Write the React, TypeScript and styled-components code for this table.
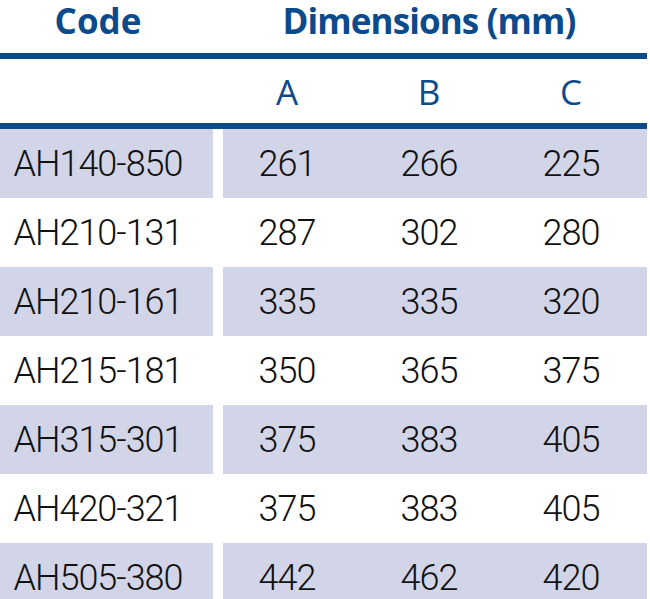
import styled, { createGlobalStyle } from "styled-components";

const GlobalStyle = createGlobalStyle`
  body {
    margin: 0;
    background: #fff;
  }
`;

const BLUE = "#0b4a8b";
const SHADE = "#d2d5e8";

const Table = styled.div`
  width: 647px;
  display: flex;
  flex-direction: column;
`;

const TitleRow = styled.div`
  display: grid;
  grid-template-columns: 213px 424px;
  column-gap: 10px;
  height: 59px;
  box-sizing: border-box;
  align-items: start;
  border-bottom: 6px solid ${BLUE};
`;

const Title = styled.div<{ $pad: number; $tight?: boolean }>`
  font-family: "Open Sans", "Liberation Sans", sans-serif;
  font-weight: 700;
  font-size: 35px;
  line-height: 42px;
  letter-spacing: ${(p) => (p.$tight ? "-0.9px" : "0")};
  color: ${BLUE};
  text-align: center;
  padding-right: ${(p) => p.$pad}px;
`;

const SubRow = styled.div`
  display: grid;
  grid-template-columns: 213px 424px;
  column-gap: 10px;
  height: 70px;
  border-bottom: 6px solid ${BLUE};
  box-sizing: border-box;
`;

const Row = styled.div`
  display: grid;
  grid-template-columns: 213px 424px;
  column-gap: 10px;
  height: 69px;
`;

const CodeCell = styled.div<{ $shade?: boolean }>`
  background: ${(p) => (p.$shade ? SHADE : "transparent")};
  display: flex;
  align-items: center;
  justify-content: center;
  padding-right: 17px;
  font-family: Roboto, "Liberation Sans", sans-serif;
  font-weight: 300;
  font-size: 36px;
  letter-spacing: -1px;
  color: #111;
`;

const DataCell = styled.div<{ $shade?: boolean }>`
  background: ${(p) => (p.$shade ? SHADE : "transparent")};
  display: grid;
  grid-template-columns: 135px 142px 142px;
  padding-right: 5px;
`;

const Value = styled.div`
  display: flex;
  align-items: center;
  justify-content: center;
  font-family: Roboto, "Liberation Sans", sans-serif;
  font-weight: 300;
  font-size: 36px;
  letter-spacing: -1px;
  color: #111;

  &:first-child {
    padding-right: 7px;
  }
`;

const Letter = styled(Value)`
  font-family: "Open Sans", "Liberation Sans", sans-serif;
  font-weight: 400;
  font-size: 35px;
  letter-spacing: 0;
  color: ${BLUE};
`;

const rows: [string, number, number, number][] = [
  ["AH140-850", 261, 266, 225],
  ["AH210-131", 287, 302, 280],
  ["AH210-161", 335, 335, 320],
  ["AH215-181", 350, 365, 375],
  ["AH315-301", 375, 383, 405],
  ["AH420-321", 375, 383, 405],
  ["AH505-380", 442, 462, 420],
];

const App = () => {
  return (
    <>
      <GlobalStyle />
      <Table>
        <TitleRow>
          <Title $pad={17}>Code</Title>
          <Title $pad={12} $tight>
            Dimensions (mm)
          </Title>
        </TitleRow>
        <SubRow>
          <div />
          <DataCell>
            <Letter>A</Letter>
            <Letter>B</Letter>
            <Letter>C</Letter>
          </DataCell>
        </SubRow>
        {rows.map(([code, a, b, c], i) => (
          <Row key={code}>
            <CodeCell $shade={i % 2 === 0}>{code}</CodeCell>
            <DataCell $shade={i % 2 === 0}>
              <Value>{a}</Value>
              <Value>{b}</Value>
              <Value>{c}</Value>
            </DataCell>
          </Row>
        ))}
      </Table>
    </>
  );
};

export default App;
